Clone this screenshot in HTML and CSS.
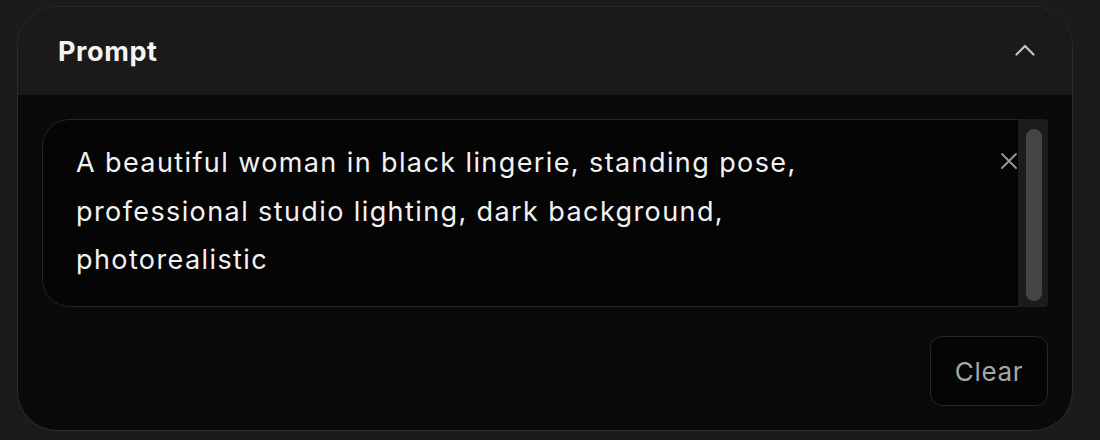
FILE: index.html
```html
<!DOCTYPE html>
<html>
<head>
	<title>Prompt</title>
	<link rel="stylesheet" href="styles.css">
</head>
<body>
	<div class="card">
		<div class="card-head">
			<h2 class="card-title">Prompt</h2>
			<button class="collapse" aria-label="Collapse">
				<svg width="20" height="12" viewBox="0 0 20 12"><path d="M1.5 10.5 L10 2 L18.5 10.5" fill="none" stroke="#c4c4c4" stroke-width="2.2" stroke-linecap="round" stroke-linejoin="round"/></svg>
			</button>
		</div>
		<div class="card-body">
			<div class="field">
				<div class="field-text">A beautiful woman in black lingerie, standing pose,<br>professional studio lighting, dark background,<br>photorealistic</div>
				<button class="field-x" aria-label="Clear text">
					<svg width="18" height="18" viewBox="0 0 18 18"><path d="M2 2 L16 16 M16 2 L2 16" stroke="#9a9a9a" stroke-width="1.8" stroke-linecap="round"/></svg>
				</button>
				<div class="scroll-track"><div class="scroll-thumb"></div></div>
			</div>
			<div class="actions">
				<button class="btn-clear">Clear</button>
			</div>
		</div>
	</div>
</body>
</html>
```

FILE: styles.css
```css
body {
	margin: 0;
	background-color: #1b1b1b;
	font-family: Inter, "Noto Sans", sans-serif;
	color: #f2f2f2;
}

.card {
	margin: 6px 0 0 17px;
	width: 1056px;
	height: 425px;
	box-sizing: border-box;
	border: 1px solid #2c2c2c;
	border-radius: 40px;
	overflow: hidden;
	background-color: #0a0a0a;
}

.card-head {
	height: 88px;
	display: flex;
	align-items: center;
	justify-content: space-between;
	padding: 0 37px 0 40px;
	background-color: #1a1a1a;
}

.card-title {
	margin: 0;
	font-size: 27px;
	font-weight: 700;
	letter-spacing: 0.6px;
	color: #f4f4f4;
}

.collapse {
	border: none;
	background: none;
	padding: 0;
	display: flex;
	margin-top: -2px;
}

.card-body {
	padding: 24px;
}

.field {
	display: flex;
	height: 188px;
	box-sizing: border-box;
	border: 1px solid #262626;
	border-radius: 28px;
	background-color: #050505;
}

.field-text {
	flex: 1;
	padding: 19px 0 0 33px;
	font-size: 27px;
	line-height: 48.5px;
	letter-spacing: 1.4px;
	color: #f2f2f2;
}

.field-x {
	align-self: flex-start;
	border: none;
	background: none;
	padding: 0;
	margin-top: 32px;
	display: flex;
}

.scroll-track {
	width: 30px;
	margin: -1px -1px -1px 0;
	padding: 10px 6px 6px 8px;
	box-sizing: border-box;
	background-color: #1c1c1c;
	border-radius: 0 4px 4px 0;
}

.scroll-thumb {
	height: 100%;
	border-radius: 8px;
	background-color: #454545;
}

.actions {
	display: flex;
	justify-content: flex-end;
	margin-top: 29px;
}

.btn-clear {
	width: 118px;
	height: 70px;
	border: 1px solid #272727;
	border-radius: 12px;
	background-color: #050505;
	color: #a6a6a6;
	font-family: Inter, "Noto Sans", sans-serif;
	font-size: 26px;
	letter-spacing: 0.7px;
}
```
